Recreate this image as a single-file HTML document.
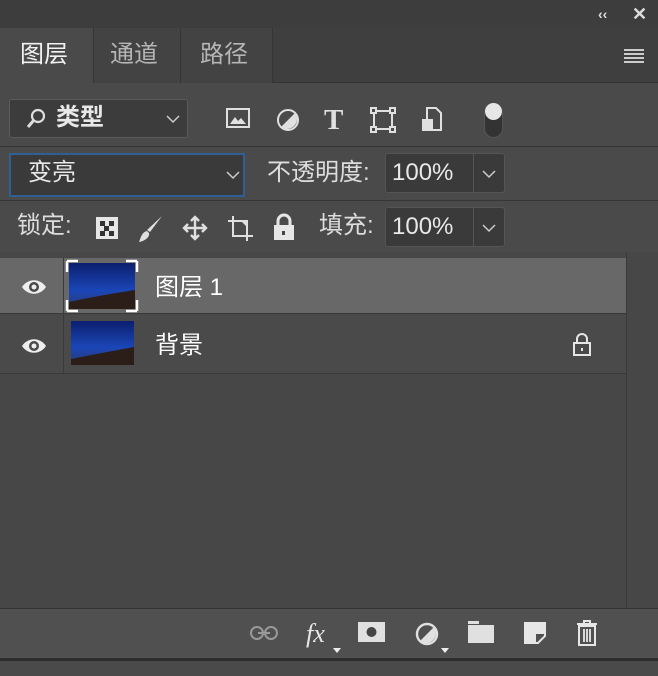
<!DOCTYPE html>
<html><head><meta charset="utf-8"><style>
*{margin:0;padding:0;box-sizing:border-box}
body{width:658px;height:676px;background:#4a4a4a;overflow:hidden;position:relative;font-family:"Liberation Sans","Noto Sans CJK SC",sans-serif;color:#e8e8e8}
.a{position:absolute}
.t{font-size:24px;line-height:1}
svg{position:absolute;overflow:visible}
</style></head><body>
<div class="a" style="left:0;top:0;width:658px;height:28px;background:#3d3d3d"></div>
<div class="a" style="left:0;top:28px;width:658px;height:55px;background:#3f3f3f;border-bottom:1px solid #333"></div>
<div class="a" style="left:0;top:28px;width:93px;height:56px;background:#4a4a4a"></div>
<div class="a" style="left:93px;top:28px;width:88px;height:55px;background:#434343;border-left:1px solid #353535;border-right:1px solid #353535"></div>
<div class="a" style="left:181px;top:28px;width:92px;height:55px;background:#434343;border-right:1px solid #353535"></div>
<div class="a t" style="left:20px;top:43px;color:#f2f2f2">图层</div>
<div class="a t" style="left:110px;top:43px;color:#b5b5b5">通道</div>
<div class="a t" style="left:200px;top:43px;color:#b5b5b5">路径</div>
<div class="a" style="left:598px;top:6px;font-size:14px;font-weight:bold;color:#ddd">‹‹</div>
<div class="a" style="left:632px;top:4px;font-size:18px;font-weight:bold;color:#ddd">✕</div>
<div class="a" style="left:624px;top:49px;width:20px;height:2px;background:#ccc;box-shadow:0 4px 0 #ccc,0 8px 0 #ccc,0 12px 0 #ccc"></div>

<!-- filter row -->
<div class="a" style="left:9px;top:99px;width:179px;height:39px;background:#3c3c3c;border:1px solid #5a5a5a;border-radius:3px"></div>
<svg style="left:26px;top:108px" width="22" height="22"><circle cx="12" cy="8" r="6" fill="none" stroke="#ddd" stroke-width="2.2"/><path d="M8 12L2 19" stroke="#ddd" stroke-width="3"/></svg>
<div class="a t" style="left:56px;top:106px;font-weight:bold">类型</div>
<svg style="left:166px;top:115px" width="14" height="8"><path d="M1 1L7 7L13 1" fill="none" stroke="#ccc" stroke-width="1.5"/></svg>
<svg style="left:226px;top:108px" width="24" height="20"><rect x="1" y="1" width="22" height="18" fill="none" stroke="#e0e0e0" stroke-width="2"/><path d="M4 16L9 9L12 13L15 10L20 16Z" fill="#e0e0e0"/></svg>
<svg style="left:276px;top:108px" width="24" height="24"><circle cx="12" cy="12" r="10" fill="none" stroke="#e0e0e0" stroke-width="2"/><path d="M19 5A10 10 0 0 1 5 19Z" fill="#e0e0e0"/></svg>
<div class="a" style="left:324px;top:104px;font-family:'Liberation Serif',serif;font-size:29px;font-weight:bold;color:#e0e0e0">T</div>
<svg style="left:371px;top:108px" width="24" height="24"><rect x="3" y="3" width="18" height="18" fill="none" stroke="#e0e0e0" stroke-width="2"/><g fill="#4a4a4a" stroke="#e0e0e0" stroke-width="2"><rect x="0" y="0" width="5" height="5"/><rect x="19" y="0" width="5" height="5"/><rect x="0" y="19" width="5" height="5"/><rect x="19" y="19" width="5" height="5"/></g></svg>
<svg style="left:421px;top:106px" width="22" height="26"><path d="M6 2H15L20 7V24H6Z" fill="none" stroke="#e0e0e0" stroke-width="2"/><rect x="1" y="13" width="11" height="12" fill="#e0e0e0"/></svg>
<div class="a" style="left:484px;top:103px;width:19px;height:35px;border-radius:10px;background:#333;border:1px solid #555"></div>
<div class="a" style="left:485px;top:103px;width:17px;height:17px;border-radius:50%;background:#e6e6e6"></div>
<div class="a" style="left:0;top:146px;width:658px;height:1px;background:#363636"></div>

<!-- blend row -->
<div class="a" style="left:9px;top:153px;width:236px;height:44px;background:#3a3a3a;border:2px solid #2f5f95"></div>
<div class="a t" style="left:28px;top:161px">变亮</div>
<svg style="left:226px;top:171px" width="14" height="8"><path d="M1 1L7 7L13 1" fill="none" stroke="#ccc" stroke-width="1.5"/></svg>
<div class="a t" style="left:267px;top:161px;color:#ddd">不透明度:</div>
<div class="a" style="left:385px;top:153px;width:120px;height:40px;background:#3a3a3a;border:1px solid #555;border-radius:3px"></div>
<div class="a" style="left:473px;top:154px;width:1px;height:38px;background:#555"></div>
<div class="a t" style="left:392px;top:161px">100%</div>
<svg style="left:482px;top:170px" width="14" height="8"><path d="M1 1L7 7L13 1" fill="none" stroke="#ccc" stroke-width="1.5"/></svg>
<div class="a" style="left:0;top:200px;width:658px;height:1px;background:#363636"></div>

<!-- lock row -->
<div class="a t" style="left:17px;top:214px;color:#ddd">锁定:</div>
<svg style="left:96px;top:217px" width="22" height="22"><rect width="22" height="22" fill="#e6e6e6"/><g fill="#333"><rect x="4" y="4" width="5" height="5"/><rect x="13" y="4" width="5" height="5"/><rect x="8" y="9" width="5" height="5"/><rect x="4" y="14" width="5" height="5"/><rect x="13" y="14" width="5" height="5"/></g></svg>
<svg style="left:138px;top:215px" width="26" height="28"><path d="M24 1L12 17L9 15Z" fill="#e0e0e0"/><path d="M9 16C4 17 3 22 1 27C7 26 12 22 11 18Z" fill="#e0e0e0"/></svg>
<svg style="left:182px;top:215px" width="26" height="26"><path d="M13 2V24M2 13H24M9 6L13 2L17 6M9 20L13 24L17 20M6 9L2 13L6 17M20 9L24 13L20 17" fill="none" stroke="#e0e0e0" stroke-width="2.4"/></svg>
<svg style="left:227px;top:215px" width="26" height="27"><path d="M6 1V21H26M1 6H20V26" fill="none" stroke="#e0e0e0" stroke-width="2"/><path d="M14 6H20V12Z" fill="#e0e0e0"/></svg>
<svg style="left:273px;top:214px" width="22" height="27"><path d="M5 12V7A6 6 0 0 1 17 7V12" fill="none" stroke="#e6e6e6" stroke-width="3"/><rect x="1" y="11" width="20" height="15" fill="#e6e6e6"/><rect x="9" y="17" width="3" height="4" fill="#444"/></svg>
<div class="a t" style="left:319px;top:214px;color:#ddd">填充:</div>
<div class="a" style="left:385px;top:207px;width:120px;height:40px;background:#3a3a3a;border:1px solid #555;border-radius:3px"></div>
<div class="a" style="left:473px;top:208px;width:1px;height:38px;background:#555"></div>
<div class="a t" style="left:392px;top:215px">100%</div>
<svg style="left:482px;top:224px" width="14" height="8"><path d="M1 1L7 7L13 1" fill="none" stroke="#ccc" stroke-width="1.5"/></svg>

<!-- layers -->
<div class="a" style="left:0;top:252px;width:658px;height:356px;background:#474747"></div>
<div class="a" style="left:626px;top:252px;width:1px;height:356px;background:#3a3a3a"></div>
<div class="a" style="left:0;top:258px;width:626px;height:56px;background:#686868;border-bottom:1px solid #3a3a3a"></div>
<div class="a" style="left:0;top:315px;width:626px;height:59px;background:#4a4a4a;border-bottom:1px solid #3a3a3a"></div>
<div class="a" style="left:63px;top:258px;width:1px;height:116px;background:#3a3a3a"></div>
<svg style="left:21px;top:278px" width="26" height="18"><path d="M1 9C7 0 19 0 25 9C19 18 7 18 1 9Z" fill="#eee"/><circle cx="13" cy="9" r="5" fill="#4a4a4a"/><circle cx="13" cy="9" r="2.5" fill="#eee"/></svg>
<svg style="left:21px;top:337px" width="26" height="18"><path d="M1 9C7 0 19 0 25 9C19 18 7 18 1 9Z" fill="#eee"/><circle cx="13" cy="9" r="5" fill="#4a4a4a"/><circle cx="13" cy="9" r="2.5" fill="#eee"/></svg>
<svg style="left:66px;top:260px" width="72" height="52"><defs><linearGradient id="g" x1="0" y1="0" x2="0" y2="1"><stop offset="0" stop-color="#0b1f6e"/><stop offset=".6" stop-color="#1b46b8"/><stop offset="1" stop-color="#2a3a70"/></linearGradient></defs><rect x="3" y="3" width="66" height="46" fill="url(#g)"/><path d="M3 42Q30 36 69 30V49H3Z" fill="#2b1d17"/><path d="M1 1H12M1 1V12M71 1H60M71 1V12M1 51H12M1 51V40M71 51H60M71 51V40" stroke="#fff" stroke-width="2.5" fill="none"/></svg>
<svg style="left:71px;top:321px" width="63" height="44"><rect width="63" height="44" fill="url(#g)"/><path d="M0 38Q25 33 63 26V44H0Z" fill="#2b1d17"/></svg>
<div class="a t" style="left:155px;top:276px;color:#fff">图层 1</div>
<div class="a t" style="left:155px;top:334px;color:#fff">背景</div>
<svg style="left:572px;top:333px" width="20" height="23"><path d="M5 10V6A5 5 0 0 1 15 6V10" fill="none" stroke="#e6e6e6" stroke-width="2"/><rect x="2" y="10" width="16" height="12" fill="none" stroke="#e6e6e6" stroke-width="2"/><rect x="9" y="15" width="2" height="3" fill="#e6e6e6"/></svg>

<!-- bottom bar -->
<div class="a" style="left:0;top:608px;width:658px;height:1px;background:#333"></div>
<div class="a" style="left:0;top:609px;width:658px;height:49px;background:#505050"></div>
<div class="a" style="left:0;top:658px;width:658px;height:3px;background:#2e2e2e"></div>
<div class="a" style="left:0;top:661px;width:658px;height:15px;background:#4a4a4a"></div>
<svg style="left:250px;top:625px" width="28" height="16"><circle cx="7" cy="8" r="6" fill="none" stroke="#999" stroke-width="2"/><circle cx="21" cy="8" r="6" fill="none" stroke="#999" stroke-width="2"/><path d="M8 8H20" stroke="#999" stroke-width="2"/></svg>
<div class="a" style="left:306px;top:619px;font-size:26px;font-style:italic;color:#e6e6e6;font-family:'Liberation Serif',serif">fx</div>
<svg style="left:333px;top:648px" width="8" height="5"><path d="M0 0H8L4 5Z" fill="#eee"/></svg>
<svg style="left:358px;top:622px" width="27" height="20"><rect width="27" height="20" fill="#e0e0e0"/><circle cx="13.5" cy="10" r="5" fill="#444"/></svg>
<svg style="left:415px;top:622px" width="24" height="24"><circle cx="12" cy="12" r="10" fill="none" stroke="#e0e0e0" stroke-width="2.4"/><path d="M19 5A10 10 0 0 1 5 19Z" fill="#e0e0e0"/></svg>
<svg style="left:441px;top:648px" width="8" height="5"><path d="M0 0H8L4 5Z" fill="#eee"/></svg>
<svg style="left:468px;top:621px" width="26" height="22"><rect x="0" y="0" width="11" height="3" fill="#e0e0e0"/><rect x="0" y="4" width="26" height="18" fill="#e0e0e0"/></svg>
<svg style="left:524px;top:622px" width="22" height="22"><path d="M1 1H21V14L14 21H1Z" fill="none" stroke="#e6e6e6" stroke-width="2"/><path d="M1 1H21V12H12V21H1Z" fill="#e6e6e6"/></svg>
<svg style="left:576px;top:620px" width="22" height="26"><path d="M1 4H21M8 4V1H14V4" fill="none" stroke="#e6e6e6" stroke-width="2"/><path d="M3 6H19V25H3Z" fill="none" stroke="#e6e6e6" stroke-width="2"/><path d="M8 9V22M11 9V22M14 9V22" stroke="#e6e6e6" stroke-width="1.8"/></svg>
</body></html>
